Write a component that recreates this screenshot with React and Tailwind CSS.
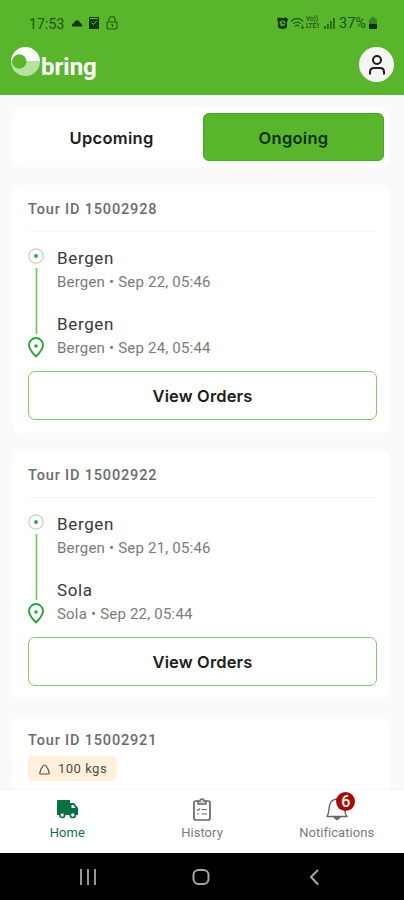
import React from "react";

function StatusBar() {
  return (
    <div className="flex h-[46px] items-center pl-[29px] pr-[27px] text-[#1f5410]">
      <span className="mt-[2px] w-[38px] whitespace-nowrap text-[14px] leading-[16px] tracking-[0.100px]">17:53</span>
      <svg className="ml-[4px] h-[10px] w-[12px]" viewBox="0 0 12 10" fill="#123a09">
        <path d="M1 8.500Q0 6 3 5Q4 1.500 7 2.500Q9 3 9 5Q12 6 11 8.500Z" />
      </svg>
      <svg className="ml-[6px] h-[12px] w-[10px]" viewBox="0 0 10 12">
        <path d="M0 0h10v12H0z" fill="#123a09" />
        <path d="M2.500 5.500l2 2L8 3.500M1 1.500h8" fill="none" stroke="#69b43c" strokeWidth="1" />
      </svg>
      <svg className="ml-[7px] h-[14px] w-[12px]" viewBox="0 0 12 14" fill="none" stroke="#286315" strokeWidth="1.200">
        <path d="M3 6V3.500a3 3 0 016 0V6M1 6h10v5q0 2-2 2H3q-2 0-2-2zM5 8.500h1.500V11" />
      </svg>
      <svg className="ml-auto h-[12px] w-[11px]" viewBox="0 0 11 12">
        <path d="M0 3Q0 0 3 .5L5.500 1.200 8 .5Q11 0 11 3L10 4.500V9Q10 12 5.500 12T1 9V4.500z" fill="#123a09" />
        <circle cx="5.500" cy="6.300" r="3" fill="#4c9a2b" />
        <path d="M5.500 4.300v2.200h2" fill="none" stroke="#123a09" />
      </svg>
      <svg className="ml-[2px] h-[13px] w-[15px]" viewBox="0 0 15 13" fill="none" stroke="#286315" strokeWidth="1.400">
        <path d="M.7 4.300Q7 -1.300 13.300 4.300M3 6.800Q7 3.500 11 6.800M5 9.200Q7 7.500 9 9.200" />
        <path d="M12.500 7.500v4M10.800 10l1.700 2 1.700-2" strokeWidth="1" />
      </svg>
      <span className="ml-[1px] flex w-[16px] flex-col text-[6.500px] leading-[7px] font-medium tracking-[-0.100px]">
        <span>Vo))</span>
        <span>LTE1</span>
      </span>
      <svg className="ml-[2px] h-[11px] w-[11px]" viewBox="0 0 11 11" fill="#286315">
        <path d="M0 8h1.800v3H0zM3 6h1.800v5H3zM6 3h1.800v8H6zM9 0h1.800v11H9z" />
      </svg>
      <span className="mt-[1px] ml-[4px] w-[30px] whitespace-nowrap text-[14.500px] leading-[16px] tracking-[0px]">37%</span>
      <svg className="h-[12px] w-[8px]" viewBox="0 0 8 12">
        <path d="M2.500 0h3v1.500h1q1.500 0 1.500 1.500v7.500q0 1.500-1.500 1.500h-5Q0 12 0 10.500V3q0-1.500 1.500-1.500h1z" fill="#398420" />
        <path d="M0 7h8v3.500q0 1.500-1.500 1.500h-5Q0 12 0 10.500z" fill="#103407" />
      </svg>
    </div>
  );
}

function Header() {
  return (
    <header className="h-[95px] shrink-0 bg-[#59b52b]">
      <StatusBar />
      <div className="flex items-start pl-[11px] pr-[10px]">
        <svg className="mt-px h-[29px] w-[29px]" viewBox="0 0 29 29">
          <path d="M0 14.500a14.500 14.500 0 0129 0z" fill="#fff" />
          <path d="M0 14.500a14.500 14.500 0 0029 0z" fill="#b8e19f" />
          <circle cx="8.300" cy="14.500" r="7.200" fill="#59b52b" />
        </svg>
        <span className="mt-[7px] ml-[1px] font-['Roboto',sans-serif] text-[24px] leading-[28px] font-bold tracking-[0px] text-white">bring</span>
        <span className="ml-auto mt-[1px] flex h-[35px] w-[35px] items-center justify-center rounded-full bg-[#f5f5f3]">
          <svg className="h-[20px] w-[18px]" viewBox="0 0 18 20" fill="none" stroke="#1d1d1d" strokeWidth="2">
            <circle cx="9" cy="5" r="4" />
            <path d="M2 19.500V17q0-4 4-4h6q4 0 4 4v2.500" />
          </svg>
        </span>
      </div>
    </header>
  );
}

function Route({ stops }) {
  return (
    <div className="flex h-[115px]">
      <svg className="mt-[1px] h-[112px] w-[16px] shrink-0" viewBox="0 0 16 112" fill="none">
        <circle cx="8" cy="8" r="7.200" stroke="#cbcbcb" strokeWidth="1.200" />
        <circle cx="8" cy="8" r="1.900" fill="#2aa541" />
        <path d="M8.500 20v66" stroke="#78c565" strokeWidth="1.700" />
        <path d="M8 108.500C4.500 105 1 101 1 97a7 7 0 0114 0c0 4-3.500 8-7 11.500z" stroke="#2f9f3d" strokeWidth="1.900" />
        <circle cx="8" cy="98" r="1.800" fill="#2aa541" />
      </svg>
      <div className="ml-[13px] flex flex-col gap-[18px]">
        {stops.map(([city, time], i) => (
          <div key={i} className="flex h-[48px] flex-col">
            <span className="h-[24px] text-[17px] leading-[23px] tracking-[0.650px] text-[#3a3a3a]">{city}</span>
            <span className="h-[24px] whitespace-nowrap text-[15px] leading-[22px] tracking-[0.200px] text-[#7b7b7b]">{city} • {time}</span>
          </div>
        ))}
      </div>
    </div>
  );
}

function TourCard({ id, stops }) {
  return (
    <section className="h-[248px] shrink-0 rounded-[8px] bg-white pl-[16px] pr-[12px] pt-[15px]">
      <div className="h-[32px] border-b border-[#f5f5f5] text-[14.500px] leading-[20px] font-medium tracking-[0.830px] text-[#6c6c6c]">Tour ID {id}</div>
      <div className="pt-[15px]">
        <Route stops={stops} />
      </div>
      <button className="mt-[9px] block h-[49px] w-full rounded-[7px] border border-[#83c770] bg-white pt-[2px] font-['Inter',sans-serif] text-[16.500px] font-semibold tracking-[0.150px] text-[#202020]">
        View Orders
      </button>
    </section>
  );
}

function BottomNav() {
  return (
    <nav className="flex h-[63px] shrink-0 bg-white text-center text-[13px] leading-[16px] tracking-[0.050px] text-[#7b7b7b] shadow-[0_-1px_2px_rgba(0,0,0,0.04)]">
      <div className="flex flex-1 flex-col items-center pt-[8px] text-[#17704b]">
        <svg className="h-[23px] w-[23px]" viewBox="0 0 23 23">
          <path d="M2 2h12v3h4l4 5v7H1V3q0-1 1-1z" fill="#087044" />
          <path d="M15.500 7h2l2 3h-4z" fill="#fff" />
          <circle cx="6.200" cy="17" r="2.500" fill="#fff" stroke="#087044" strokeWidth="1.700" />
          <circle cx="16.800" cy="17" r="2.500" fill="#fff" stroke="#087044" strokeWidth="1.700" />
        </svg>
        <span className="mt-[4px]">Home</span>
      </div>
      <div className="flex flex-1 flex-col items-center pt-[8px]">
        <svg className="h-[23px] w-[20px]" viewBox="0 0 20 23" fill="none" stroke="#686868" strokeWidth="1.700">
          <path d="M6 3H4Q2 3 2 5v15q0 2 2 2h12q2 0 2-2V5q0-2-2-2h-2" />
          <path d="M6 6V3h2q0-2 2-2t2 2h2v3z" fill="#d8d8d8" strokeWidth="1.400" />
          <path d="M5 11.500l1.200 1 1.800-2.200M9.500 11.500h5.500M5 16h2M9.500 16h5.500" strokeWidth="1.100" />
        </svg>
        <span className="mt-[4px]">History</span>
      </div>
      <div className="relative flex flex-1 flex-col items-center pt-[8px]">
        <svg className="h-[23px] w-[22px]" viewBox="0 0 22 23" fill="none" stroke="#666" strokeWidth="1.400" strokeLinejoin="round">
          <path d="M1 18.500h20q-2-2.500-2-5V8q0-6-7-7-7 0-8.500 6.500L2.500 14q0 2-1.500 4.500z" />
          <path d="M8 19q3 5 6 0z" fill="#777" />
        </svg>
        <span className="mt-[4px]">Notifications</span>
        <span className="absolute top-[2px] left-[67px] flex h-[19px] w-[19px] items-center justify-center rounded-full bg-[#a80a0a] text-[16px] font-medium tracking-normal text-white">6</span>
      </div>
    </nav>
  );
}

function SystemNav() {
  return (
    <footer className="h-[47px] shrink-0 bg-black">
      <svg className="h-[47px] w-[404px]" viewBox="0 0 404 47" fill="none" stroke="#a7a7a7" strokeWidth="2">
        <path d="M81 16v16M88 16v16M95 16v16" strokeWidth="1.800" />
        <rect x="193.500" y="17" width="15" height="14" rx="5" />
        <path d="M318 17l-7 7 7 7.500" />
      </svg>
    </footer>
  );
}

export default function App() {
  return (
    <div className="flex h-[900px] w-[404px] flex-col overflow-hidden bg-[#fafafa] font-['Roboto',sans-serif]">
      <Header />
      <main className="flex h-[695px] shrink-0 flex-col overflow-hidden pl-[12px] pr-[15px] pt-[13px]">
        <div className="flex h-[59px] shrink-0 rounded-[8px] bg-white px-[5px] py-[5px] font-['Inter',sans-serif] text-[16.500px] font-semibold tracking-[0.300px]">
          <button className="flex-1 pt-[1px] pl-[3px] text-[#202020]">Upcoming</button>
          <button className="h-[48px] w-[181px] rounded-[6px] border border-[#43a91f] bg-[#59b52b] pt-[2px] text-[#12300a]">Ongoing</button>
        </div>
        <div className="mt-[18px] flex flex-col gap-[18px]">
          <TourCard id="15002928" stops={[["Bergen", "Sep 22, 05:46"], ["Bergen", "Sep 24, 05:44"]]} />
          <TourCard id="15002922" stops={[["Bergen", "Sep 21, 05:46"], ["Sola", "Sep 22, 05:44"]]} />
          <section className="h-[90px] shrink-0 rounded-t-[8px] bg-white pl-[16px] pt-[14px]">
            <div className="text-[14.500px] leading-[20px] font-medium tracking-[0.830px] text-[#6c6c6c]">Tour ID 15002921</div>
            <div className="mt-[5px] flex h-[25px] w-[89px] items-center rounded-[5px] bg-[#fff0dc] pt-[1px] pl-[11px] text-[13px] tracking-[0.500px] text-[#4c4c46]">
              <svg className="h-[11px] w-[11px]" viewBox="0 0 11 11" fill="none" stroke="#555" strokeWidth="1.200">
                <path d="M3.500 3Q2.500 4 1.800 5.500L.7 9q0 1 1 1h7.600q1 0 1-1L9.200 5.500Q8.500 4 7.500 3M3 3.500Q4 1 5.500 1T8 3.500" />
              </svg>
              <span className="ml-[8px]">100 kgs</span>
            </div>
          </section>
        </div>
      </main>
      <BottomNav />
      <SystemNav />
    </div>
  );
}
